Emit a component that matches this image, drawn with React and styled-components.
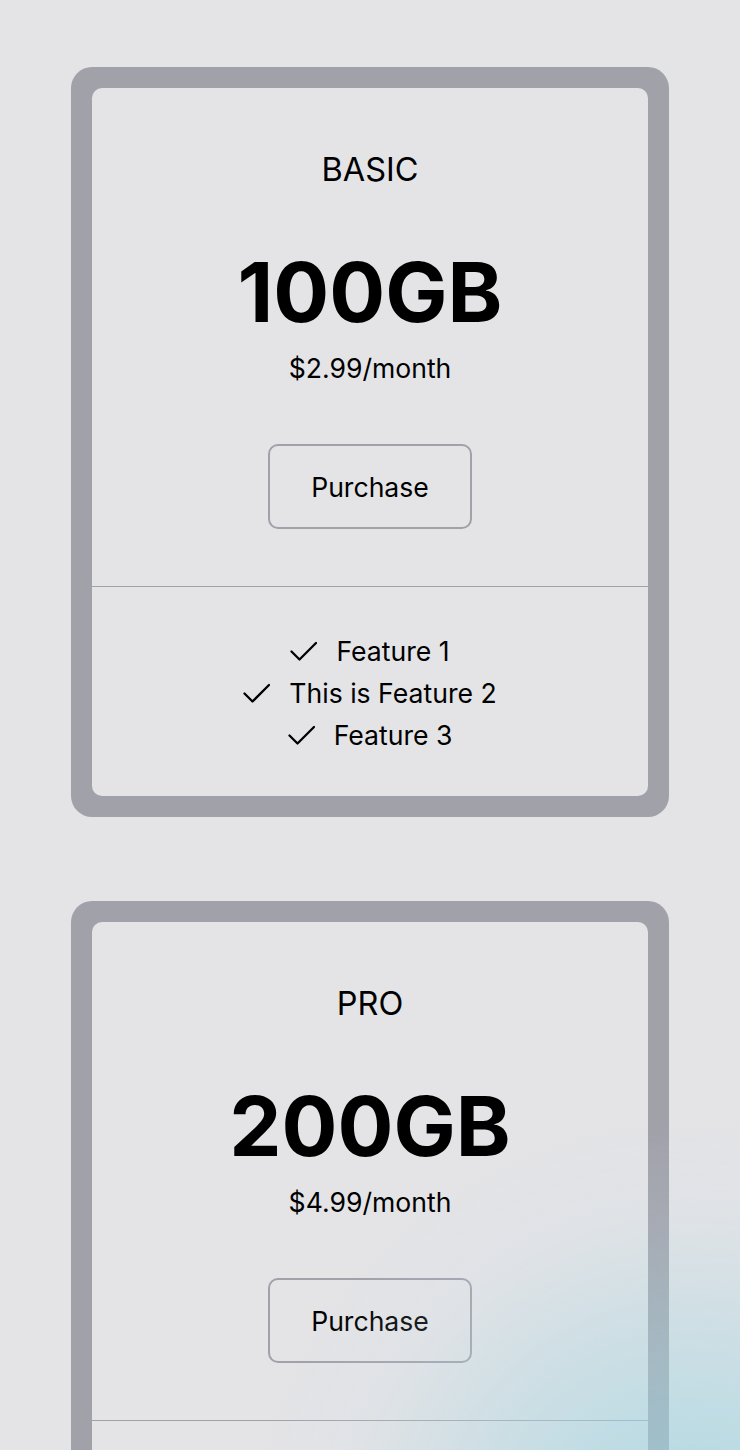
import React from "react";
import styled, { createGlobalStyle } from "styled-components";

const Global = createGlobalStyle`
  html, body { margin: 0; padding: 0; background: #e4e4e7; }
  body { font-family: Inter, "Noto Sans", "Liberation Sans", sans-serif; color: #000; }
`;

const Page = styled.main`
  min-height: 1450px;
  display: flex;
  flex-direction: column;
  align-items: center;
  gap: 84px;
  padding: 67px 0 67px;
  box-sizing: border-box;
`;

const Glow = styled.div`
  position: fixed;
  inset: 0;
  pointer-events: none;
  background: radial-gradient(
    circle at 690px 1560px,
    rgba(150, 212, 225, 0.75) 0px,
    rgba(170, 215, 225, 0.45) 210px,
    rgba(200, 220, 228, 0.15) 350px,
    rgba(228, 228, 231, 0) 440px
  );
`;

const Frame = styled.section`
  width: 598px;
  box-sizing: border-box;
  padding: 21px;
  background: #a1a1aa;
  border-radius: 21px;
`;

const Inner = styled.div`
  background: #e4e4e7;
  border-radius: 10px;
  display: flex;
  flex-direction: column;
`;

const Head = styled.div`
  display: flex;
  flex-direction: column;
  align-items: center;
  padding: 62px 0 57px;
  border-bottom: 1px solid #a1a1aa;
`;

const Tier = styled.h2`
  margin: 0;
  font-size: 32.5px;
  line-height: 40px;
  font-weight: 400;
`;

const Size = styled.div`
  margin-top: 52px;
  font-size: 83px;
  line-height: 100px;
  font-weight: 700;
`;

const Price = styled.div`
  margin-top: 10px;
  font-size: 26.6px;
  line-height: 32px;
`;

const Button = styled.button`
  margin-top: 60px;
  width: 204px;
  height: 85px;
  box-sizing: border-box;
  background: transparent;
  border: 2px solid #a1a1aa;
  border-radius: 10px;
  font-family: inherit;
  font-size: 26.6px;
  color: #000;
  cursor: pointer;
`;

const Features = styled.ul`
  list-style: none;
  margin: 0;
  padding: 43px 0 40px;
  display: flex;
  flex-direction: column;
  align-items: center;
`;

const Feature = styled.li`
  display: flex;
  align-items: center;
  gap: 19px;
  font-size: 26.6px;
  line-height: 42px;
`;

const Check = () => (
  <svg width="27" height="20" viewBox="0 0 27 20" fill="none">
    <path d="M1.5 10.5 L9.5 18.5 L26 2" stroke="#000" strokeWidth="2.3" strokeLinecap="round" strokeLinejoin="round" />
  </svg>
);

const plans = [
  { tier: "BASIC", size: "100GB", price: "$2.99/month" },
  { tier: "PRO", size: "200GB", price: "$4.99/month" },
];

const features = ["Feature 1", "This is Feature 2", "Feature 3"];

export default function App() {
  return (
    <>
      <Global />
      <Page>
        {plans.map((p) => (
          <Frame key={p.tier}>
            <Inner>
              <Head>
                <Tier>{p.tier}</Tier>
                <Size>{p.size}</Size>
                <Price>{p.price}</Price>
                <Button>Purchase</Button>
              </Head>
              <Features>
                {features.map((f) => (
                  <Feature key={f}>
                    <Check />
                    <span>{f}</span>
                  </Feature>
                ))}
              </Features>
            </Inner>
          </Frame>
        ))}
      </Page>
      <Glow />
    </>
  );
}
